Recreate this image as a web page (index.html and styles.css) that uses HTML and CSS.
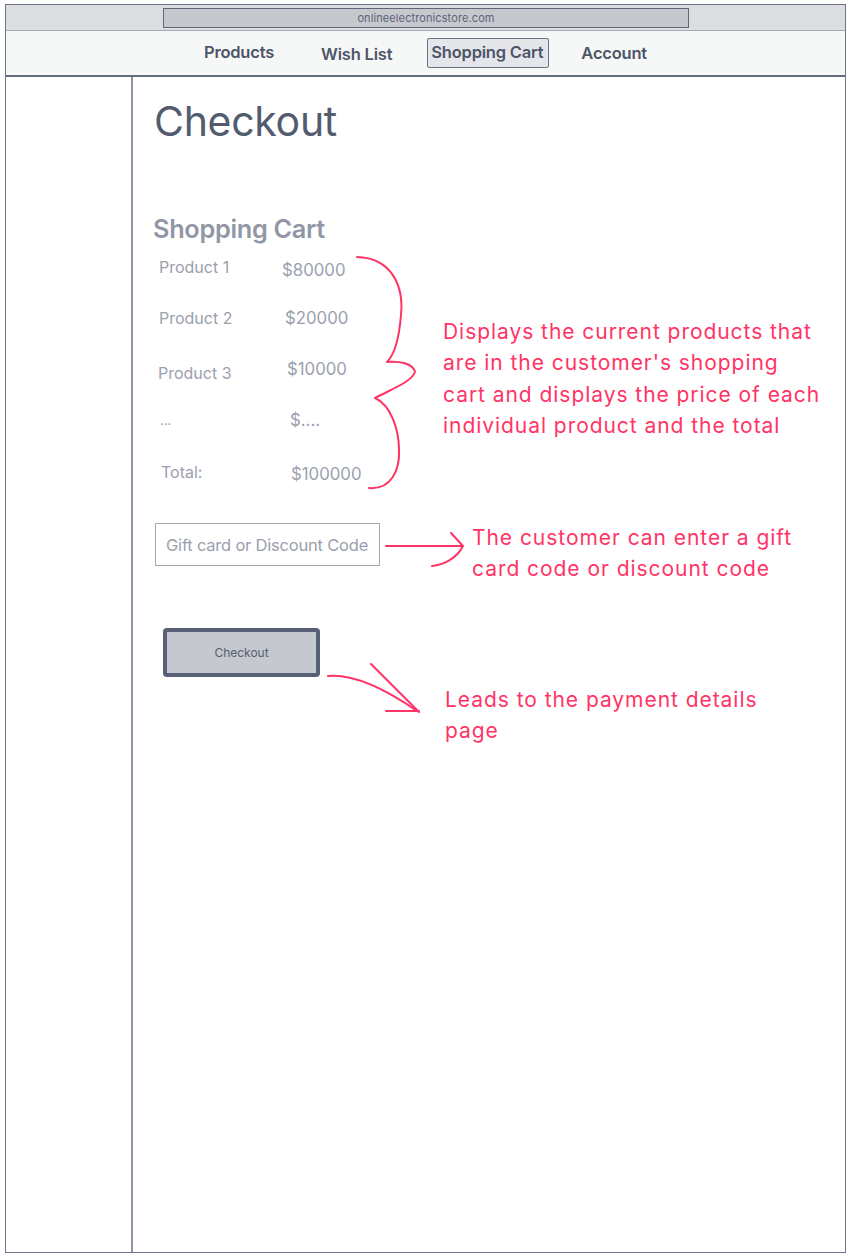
FILE: index.html
```html
<!DOCTYPE html>
<html lang="en">
<head>
<meta charset="utf-8">
<title>Checkout</title>
<link rel="stylesheet" href="styles.css">
</head>
<body>
<div class="window">
  <div class="addressbar">
    <div class="url">onlineelectronicstore.com</div>
  </div>
  <nav class="nav">
    <a class="nav-item nav-products">Products</a>
    <a class="nav-item nav-wish">Wish List</a>
    <a class="nav-item nav-cart">Shopping Cart</a>
    <a class="nav-item nav-account">Account</a>
  </nav>
  <div class="main">
    <aside class="sidebar"></aside>
    <section class="content">
      <h1 class="title">Checkout</h1>
      <h2 class="subtitle">Shopping Cart</h2>
      <div class="cart">
        <div class="row r1"><span class="label">Product 1</span><span class="price">$80000</span></div>
        <div class="row r2"><span class="label">Product 2</span><span class="price">$20000</span></div>
        <div class="row r3"><span class="label">Product 3</span><span class="price">$10000</span></div>
        <div class="row r4"><span class="label dots">...</span><span class="price">$....</span></div>
        <div class="row r5"><span class="label">Total:</span><span class="price">$100000</span></div>
      </div>
      <div class="code-input">Gift card or Discount Code</div>
      <button class="checkout-btn">Checkout</button>

      <svg class="sketch" width="718" height="1180" viewBox="134 77 718 1180" xmlns="http://www.w3.org/2000/svg">
        <g fill="none" stroke="#ff3466" stroke-width="2" stroke-linecap="round" stroke-linejoin="round">
          <path d="M358 257 C 392 258, 405 285, 402 315 C 400 340, 395 355, 388 362 C 400 361, 414 363, 416 372 C 412 382, 395 388, 376 398 C 392 405, 400 430, 400 450 C 401 470, 392 490, 370 488"/>
          <path d="M387 546 L 463 546"/>
          <path d="M452 533 L 464 546 C 458 558, 445 565, 433 566"/>
          <path d="M329 676 C 352 674, 382 686, 418 711"/>
          <path d="M372 664 L 420 712"/>
          <path d="M387 711 L 420 711"/>
        </g>
      </svg>
      <p class="note note-cart">Displays the current products that<br>are in the customer's shopping<br>cart and displays the price of each<br>individual product and the total</p>
      <p class="note note-code">The customer can enter a gift<br>card code or discount code</p>
      <p class="note note-btn">Leads to the payment details<br>page</p>
    </section>
  </div>
</div>
</body>
</html>
```
FILE: styles.css
```css
* { box-sizing: border-box; }
html, body { margin: 0; padding: 0; background: #ffffff; }
body {
  font-family: Inter, "Noto Sans", "Liberation Sans", sans-serif;
  width: 852px;
  height: 1260px;
  overflow: hidden;
}
.window {
  margin: 4px 0 0 5px;
  width: 841px;
  height: 1249px;
  border: 1.5px solid #6e7588;
  display: flex;
  flex-direction: column;
}
.addressbar {
  height: 25px;
  background: #dcdde1;
  display: flex;
  align-items: center;
  justify-content: center;
  flex: none;
}
.url {
  width: 526px;
  height: 20px;
  margin-left: 1px;
  background: #c6c8ce;
  border: 1.5px solid #5e6679;
  font-size: 11px;
  color: #5c6477;
  display: flex;
  align-items: center;
  justify-content: center;
  letter-spacing: 0.1px;
}
.nav {
  height: 47px;
  flex: none;
  background: #f6f7f7;
  border-top: 1.5px solid #a4a9b4;
  border-bottom: 2px solid #646c7e;
  display: flex;
  align-items: center;
  padding-left: 198px;
}
.nav-item {
  font-size: 16.5px;
  font-weight: 600;
  color: #4d5568;
  letter-spacing: -0.2px;
}
.nav-products { margin-top: -3px; }
.nav-wish { margin-left: 47px; margin-top: 1px; }
.nav-cart {
  margin-left: 35px;
  border: 1.5px solid #6a7284;
  background: #e5e6ea;
  padding: 3px 5px 5px 3px;
  border-radius: 2px;
}
.nav-account { margin-left: 32px; }
.main {
  flex: 1;
  display: flex;
  min-height: 0;
}
.sidebar {
  width: 127px;
  flex: none;
  border-right: 2px solid #8f95a3;
}
.content {
  flex: 1;
  position: relative;
  padding-left: 21px;
}
.title {
  margin: 20px 0 0 0;
  font-size: 41px;
  font-weight: 400;
  color: #535b6f;
  letter-spacing: -0.3px;
  line-height: 48px;
}
.subtitle {
  margin: 69px 0 0 -1px;
  font-size: 25.3px;
  font-weight: 600;
  color: #9197a6;
  letter-spacing: -0.3px;
  line-height: 30px;
}
.cart {
  margin-top: -2px;
  display: flex;
  flex-direction: column;
}
.row {
  display: grid;
  grid-template-columns: 128px auto;
  align-items: center;
  height: 52px;
  color: #9aa0ae;
}
.label { font-size: 16px; padding-left: 5px; }
.price { font-size: 16.8px; }
.r1 { height: 50px; }
.r1 .price { transform: translateY(3px); }
.r2 .price { padding-left: 3px; }
.r3 { height: 50px; }
.r3 .label { padding-left: 4px; transform: translateY(4px); }
.r3 .price { padding-left: 5px; }
.r4 .label { font-size: 13px; padding-left: 6px; }
.r4 .price { padding-left: 8px; }
.r5 .label { padding-left: 7px; }
.r5 .price { padding-left: 9px; transform: translateY(2px); }
.code-input {
  margin-top: 25px;
  margin-left: 1px;
  width: 225px;
  height: 43px;
  border: 1.5px solid #a3a8b4;
  font-size: 16.5px;
  color: #9ba0ae;
  display: flex;
  align-items: center;
  padding-left: 10px;
  letter-spacing: -0.2px;
}
.checkout-btn {
  display: flex;
  align-items: center;
  justify-content: center;
  margin-top: 62px;
  margin-left: 9px;
  width: 157px;
  height: 49px;
  border: 4.5px solid #576074;
  border-radius: 4px;
  background: #c6c8d0;
  font-family: Inter, "Noto Sans", "Liberation Sans", sans-serif;
  font-size: 12px;
  color: #555d70;
  padding: 0;
}
.sketch {
  position: absolute;
  left: 0;
  top: 0;
  pointer-events: none;
}
.note {
  position: absolute;
  margin: 0;
  color: #ff3466;
  font-size: 21px;
  line-height: 31.3px;
  letter-spacing: 0.95px;
  white-space: nowrap;
}
.note-cart { left: 310px; top: 239px; }
.note-code { left: 339px; top: 445px; }
.note-btn { left: 312px; top: 607px; }
```
